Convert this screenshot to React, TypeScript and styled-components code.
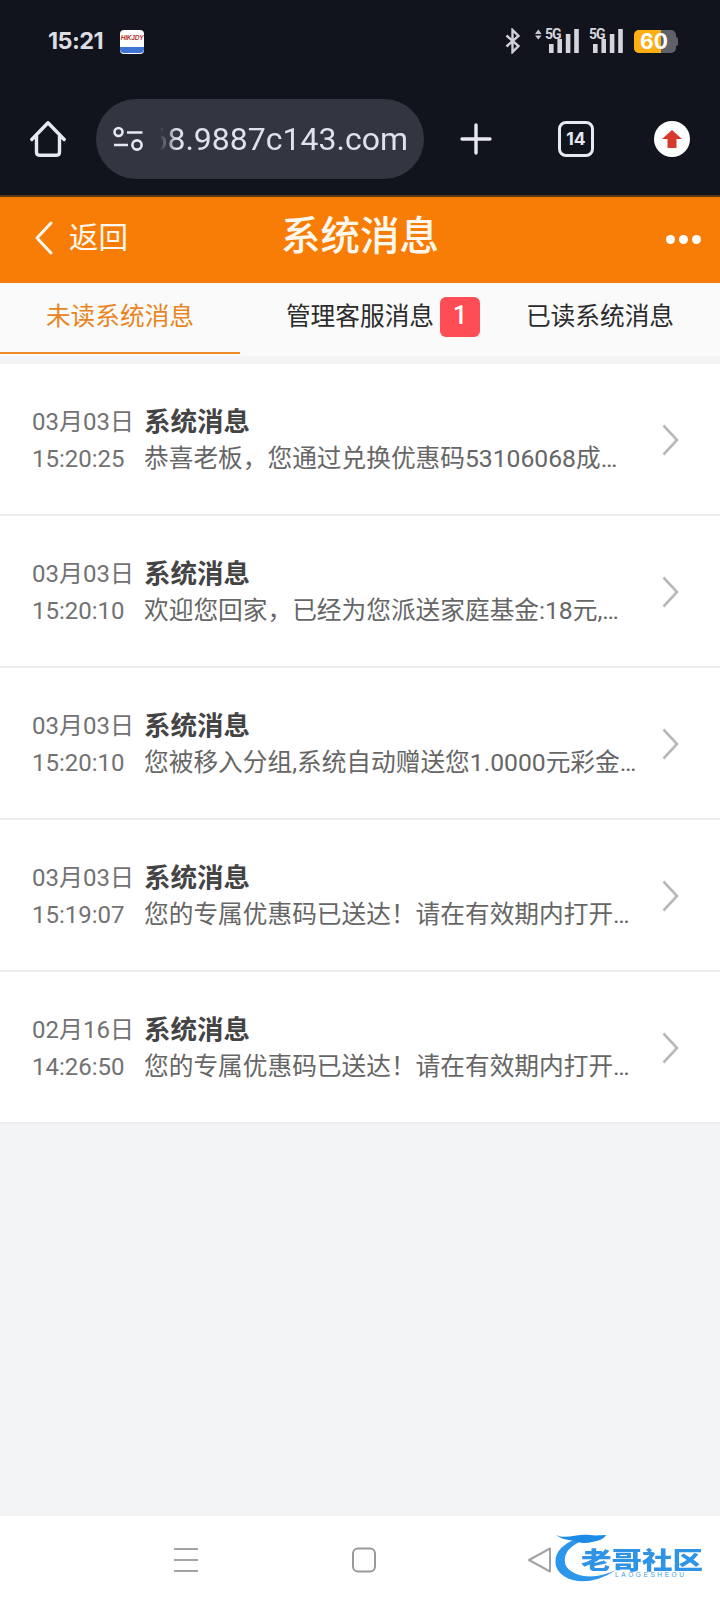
import React from "react";
import styled, { createGlobalStyle } from "styled-components";

const CJK = `Roboto, "Noto Sans CJK SC", sans-serif`;

const Global = createGlobalStyle`
  html, body { margin: 0; padding: 0; background: #f3f4f6; }
  * { box-sizing: border-box; }
`;

const Page = styled.div`
  width: 720px;
  height: 1604px;
  display: flex;
  flex-direction: column;
  font-family: ${CJK};
  overflow: hidden;
`;

const Chrome = styled.div`
  height: 197px;
  flex: none;
  background: #11131d;
  border-bottom: 2px solid #5a3a1c;
`;

const StatusBar = styled.div`
  height: 95px;
  display: flex;
  align-items: flex-start;
  padding: 28px 42px 0 48px;
  color: #dcdde3;
`;

const Clock = styled.span`
  font: 700 23.5px/26px Inter, sans-serif;
  letter-spacing: -0.6px;
  width: 72px;
`;

const AppBadge = styled.div`
  width: 24px;
  height: 24px;
  margin-top: 2px;
  border-radius: 4px;
  background: #fff;
  overflow: hidden;
  display: flex;
  flex-direction: column;
`;

const AppName = styled.span`
  flex: 1;
  font: italic 700 6.5px/16px "Liberation Sans", sans-serif;
  letter-spacing: -0.2px;
  color: #b8332f;
  text-align: center;
`;

const AppStrip = styled.span`
  height: 6px;
  margin-bottom: 1px;
  background: #3f74d2;
  border-radius: 0 0 4px 4px;
`;

const StatusIcons = styled.div`
  margin-left: auto;
  display: flex;
  align-items: flex-start;
`;

const SignalSlot = styled.svg<{ $left: number }>`
  flex: none;
  margin-left: ${(p) => p.$left}px;
`;

const Battery = styled.div`
  position: relative;
  width: 42px;
  height: 23px;
  margin: 2px 0 0 10px;
  border-radius: 5px;
  overflow: hidden;
  background: #5f6068;
  font: 700 21px/24px Inter, sans-serif;
  color: #fff;
  text-align: center;
`;

const BatteryFill = styled.div`
  position: absolute;
  inset: 0 15px 0 0;
  background: #fdae13;
`;

const BatteryLabel = styled.span`
  position: relative;
  margin-left: -2px;
`;

const BatteryCap = styled.span`
  width: 2px;
  height: 9px;
  margin-top: 9px;
  background: #5f6068;
  border-radius: 0 2px 2px 0;
`;

const ToolBar = styled.div`
  height: 88px;
  display: flex;
  align-items: center;
  padding-left: 30px;
  color: #e6e8f2;
`;

const ToolIcon = styled.div<{ $left?: number; $size?: number }>`
  flex: none;
  margin-left: ${(p) => p.$left ?? 0}px;
  width: ${(p) => p.$size ?? 36}px;
  height: ${(p) => p.$size ?? 36}px;
  display: flex;
  align-items: center;
  justify-content: center;
`;

const UrlPill = styled.div`
  flex: none;
  margin-left: 30px;
  width: 328px;
  height: 80px;
  border-radius: 40px;
  background: #333541;
  display: flex;
  align-items: center;
  padding-left: 17px;
`;

const UrlClip = styled.div`
  margin-left: 17px;
  width: 248px;
  overflow: hidden;
  display: flex;
  justify-content: flex-end;
  mask-image: linear-gradient(to right, transparent 0, #000 16px);
`;

const UrlText = styled.span`
  flex: none;
  font: 400 32px/40px Roboto, sans-serif;
  color: #dfe2ec;
  white-space: nowrap;
`;

const TabCount = styled.div`
  width: 36px;
  height: 36px;
  border: 3px solid #e6e8f2;
  border-radius: 8px;
  display: flex;
  align-items: center;
  justify-content: center;
  font: 700 17.5px/20px Inter, sans-serif;
`;

const UpdateDot = styled.div`
  width: 36px;
  height: 36px;
  border-radius: 50%;
  background: #fff;
  display: flex;
  align-items: center;
  justify-content: center;
`;

const Header = styled.header`
  flex: none;
  position: relative;
  height: 86px;
  background: #f77d06;
  color: #fff8ee;
  display: flex;
  align-items: center;
  padding: 0 19px 4px 35px;
`;

const BackLabel = styled.span`
  margin-left: 16px;
  font-size: 29.5px;
  line-height: 40px;
`;

const Title = styled.h1`
  position: absolute;
  left: 0;
  right: 0;
  top: 17px;
  margin: 0;
  text-align: center;
  font-size: 39.5px;
  font-weight: 500;
  line-height: 46px;
`;

const Dots = styled.div`
  margin-left: auto;
  display: flex;
  gap: 4px;
  padding-top: 2px;
`;

const Dot = styled.span`
  width: 9px;
  height: 9px;
  border-radius: 50%;
  background: #fff;
`;

const Tabs = styled.nav`
  flex: none;
  height: 73px;
  display: grid;
  grid-template-columns: repeat(3, 240px);
  background: #fafafa;
`;

const Tab = styled.div<{ $active?: boolean }>`
  position: relative;
  height: 71px;
  padding-top: 14px;
  text-align: center;
  font-size: 24.7px;
  line-height: 40px;
  color: ${(p) => (p.$active ? "#e8851e" : "#2b2b2b")};
  border-bottom: 2px solid ${(p) => (p.$active ? "#ee8a25" : "transparent")};
`;

const Badge = styled.span`
  position: absolute;
  left: 200px;
  top: 14px;
  width: 40px;
  height: 40px;
  border-radius: 6px;
  background: #ff4d55;
  color: #fff;
  font: 500 25px/38px Roboto, sans-serif;
  text-align: center;
`;

const List = styled.main`
  flex: 1;
  margin-top: 8px;
`;

const Row = styled.article`
  height: 152px;
  background: #fff;
  border-bottom: 2px solid #ececee;
  display: flex;
  align-items: center;
  padding: 2px 41px 0 32px;
`;

const RowBody = styled.div`
  display: grid;
  grid-template-columns: 112px 496px;
  grid-auto-rows: 37px;
  align-items: center;
`;

const Stamp = styled.span`
  font-size: 24px;
  line-height: 30px;
  color: #727272;
  white-space: nowrap;
`;

const RowTitle = styled.span`
  font-size: 26.5px;
  font-weight: 700;
  line-height: 32px;
  color: #444;
`;

const RowText = styled.span`
  font-size: 24.7px;
  line-height: 32px;
  color: #666;
  white-space: nowrap;
  overflow: hidden;
  text-overflow: ellipsis;
`;

const Chevron = styled.svg`
  flex: none;
  margin-left: auto;
`;

const BottomNav = styled.footer`
  flex: none;
  position: relative;
  height: 88px;
  background: #fff;
  display: flex;
  align-items: flex-start;
  padding: 31px 0 0 173px;
`;

const NavGlyph = styled.svg<{ $left?: number }>`
  flex: none;
  margin-left: ${(p) => p.$left ?? 0}px;
`;

const Watermark = styled.div`
  position: absolute;
  left: 552px;
  top: 14px;
  width: 156px;
  height: 56px;
`;

const WatermarkName = styled.span`
  position: absolute;
  left: 29px;
  top: 14px;
  font: 900 30.5px/30px "Noto Sans CJK SC", sans-serif;
  color: #2f93e6;
  white-space: nowrap;
  transform: scaleY(0.78);
`;

const WatermarkSub = styled.span`
  position: absolute;
  left: 63px;
  top: 41px;
  font: 400 6.5px/8px "Liberation Sans", sans-serif;
  letter-spacing: 2.6px;
  color: #3d9ee8;
`;

const messages = [
  { date: "03月03日", time: "15:20:25", text: "恭喜老板，您通过兑换优惠码53106068成功领取彩金" },
  { date: "03月03日", time: "15:20:10", text: "欢迎您回家，已经为您派送家庭基金:18元,请查收并祝您游戏愉快" },
  { date: "03月03日", time: "15:20:10", text: "您被移入分组,系统自动赠送您1.0000元彩金,请查收" },
  { date: "03月03日", time: "15:19:07", text: "您的专属优惠码已送达！请在有效期内打开兑换领取" },
  { date: "02月16日", time: "14:26:50", text: "您的专属优惠码已送达！请在有效期内打开兑换领取" },
];

// Four rising bars under a 5G tag, with an optional up/down traffic marker in front.
function SignalIcon({ arrows, left }: { arrows?: boolean; left: number }) {
  const x = arrows ? 10 : 0;
  const bars = [16, 11, 6, 1];
  return (
    <SignalSlot $left={left} width={x + 35} height="26" viewBox={`0 0 ${x + 35} 26`}>
      {arrows && <path d="M0 6 L3.3 1.5 L6.6 6 Z M0 7.5 H6.6 L3.3 11.5 Z" fill="#c9cad0" />}
      <text x={x} y="11" fontFamily="Roboto, sans-serif" fontWeight="700" fontSize="14" fill="#d5d6dc" letterSpacing="-1">
        5G
      </text>
      {bars.map((top, i) => (
        <rect key={top} x={x + 4 + i * 8.4} y={top} width="4.6" height={25 - top} fill="#d5d6dc" />
      ))}
    </SignalSlot>
  );
}

export default function App() {
  return (
    <Page>
      <Global />
      <Chrome>
        <StatusBar>
          <Clock>15:21</Clock>
          <AppBadge>
            <AppName>HIKJDY</AppName>
            <AppStrip />
          </AppBadge>
          <StatusIcons>
            <svg width="16" height="26" viewBox="0 0 16 26" fill="none" stroke="#d0d1d7" strokeWidth="2.4">
              <path d="M1.5 7.5 L13.5 18 L7.5 24 V2 L13.5 8 L1.5 18.5" />
            </svg>
            <SignalIcon arrows left={14} />
            <SignalIcon left={9} />
            <Battery>
              <BatteryFill />
              <BatteryLabel>60</BatteryLabel>
            </Battery>
            <BatteryCap />
          </StatusIcons>
        </StatusBar>
        <ToolBar>
          <ToolIcon>
            <svg width="36" height="36" viewBox="0 0 36 36" fill="none" stroke="#e6e8f2" strokeWidth="3.4" strokeLinejoin="round" strokeLinecap="round">
              <path d="M1.8 18.5 L18 1.8 L34.2 18.5 M6.5 15 V31 Q6.5 34.2 9.5 34.2 H26.5 Q29.5 34.2 29.5 31 V15" />
            </svg>
          </ToolIcon>
          <UrlPill>
            <svg width="30" height="26" viewBox="0 0 30 26" fill="none" stroke="#e6e8f2" strokeWidth="2.6">
              <circle cx="5.5" cy="6" r="4" />
              <path d="M14 6.5 H29.5 M1 19 H15" />
              <circle cx="24" cy="19" r="4.6" />
            </svg>
            <UrlClip>
              <UrlText>68.9887c143.com</UrlText>
            </UrlClip>
          </UrlPill>
          <ToolIcon $left={36} $size={32}>
            <svg width="32" height="32" viewBox="0 0 32 32" stroke="#e6e8f2" strokeWidth="3.4" strokeLinecap="round">
              <path d="M16 2 V30 M2 16 H30" />
            </svg>
          </ToolIcon>
          <ToolIcon $left={66}>
            <TabCount>14</TabCount>
          </ToolIcon>
          <ToolIcon $left={60}>
            <UpdateDot>
              <svg width="20" height="18" viewBox="0 0 20 18">
                <path d="M10 0 L20 9 H14.5 V18 H5.5 V9 H0 Z" fill="#d9382c" />
              </svg>
            </UpdateDot>
          </ToolIcon>
        </ToolBar>
      </Chrome>

      <Header>
        <svg width="18" height="34" viewBox="0 0 18 34" fill="none" stroke="#fff8ee" strokeWidth="3" strokeLinecap="round" strokeLinejoin="round">
          <path d="M16 2 L2 17 L16 32" />
        </svg>
        <BackLabel>返回</BackLabel>
        <Title>系统消息</Title>
        <Dots>
          <Dot />
          <Dot />
          <Dot />
        </Dots>
      </Header>

      <Tabs>
        <Tab $active>未读系统消息</Tab>
        <Tab>
          管理客服消息
          <Badge>1</Badge>
        </Tab>
        <Tab>已读系统消息</Tab>
      </Tabs>

      <List>
        {messages.map((m) => (
          <Row key={m.time + m.text}>
            <RowBody>
              <Stamp>{m.date}</Stamp>
              <RowTitle>系统消息</RowTitle>
              <Stamp>{m.time}</Stamp>
              <RowText>{m.text}</RowText>
            </RowBody>
            <Chevron width="17" height="32" viewBox="0 0 17 32" fill="none" stroke="#b8b8b8" strokeWidth="2.6">
              <path d="M1.5 1.5 L15 16 L1.5 30.5" />
            </Chevron>
          </Row>
        ))}
      </List>

      <BottomNav>
        <NavGlyph width="26" height="26" viewBox="0 0 26 26" stroke="#a3a3a3" strokeWidth="2.2">
          <path d="M1 2 H25 M1 13 H25 M1 24 H25" />
        </NavGlyph>
        <NavGlyph $left={152} width="26" height="26" viewBox="0 0 26 26" fill="none" stroke="#999" strokeWidth="2">
          <rect x="2" y="1.5" width="22" height="23" rx="5" />
        </NavGlyph>
        <NavGlyph $left={150} width="26" height="26" viewBox="0 0 26 26" fill="none" stroke="#a3a3a3" strokeWidth="2" strokeLinejoin="round">
          <path d="M2 13 L23 1.5 V24.5 Z" />
        </NavGlyph>
        <Watermark>
          <svg width="70" height="56" viewBox="0 0 70 56">
            <path d="M24 9 C10 14 1 24 4 36 C8 50 34 60 64 40 C44 50 22 48 14 36 C10 26 16 17 28 12 Z" fill="#2b96ea" />
            <path d="M4 5 C14 10 26 3 38 5 C44 6 50 5 54 5 C52 9 46 11 40 12 C34 14 28 13 24 11 C16 10 9 9 4 5 Z" fill="#1d8ae6" />
          </svg>
          <WatermarkName>老哥社区</WatermarkName>
          <WatermarkSub>LAOGESHEOU</WatermarkSub>
        </Watermark>
      </BottomNav>
    </Page>
  );
}
